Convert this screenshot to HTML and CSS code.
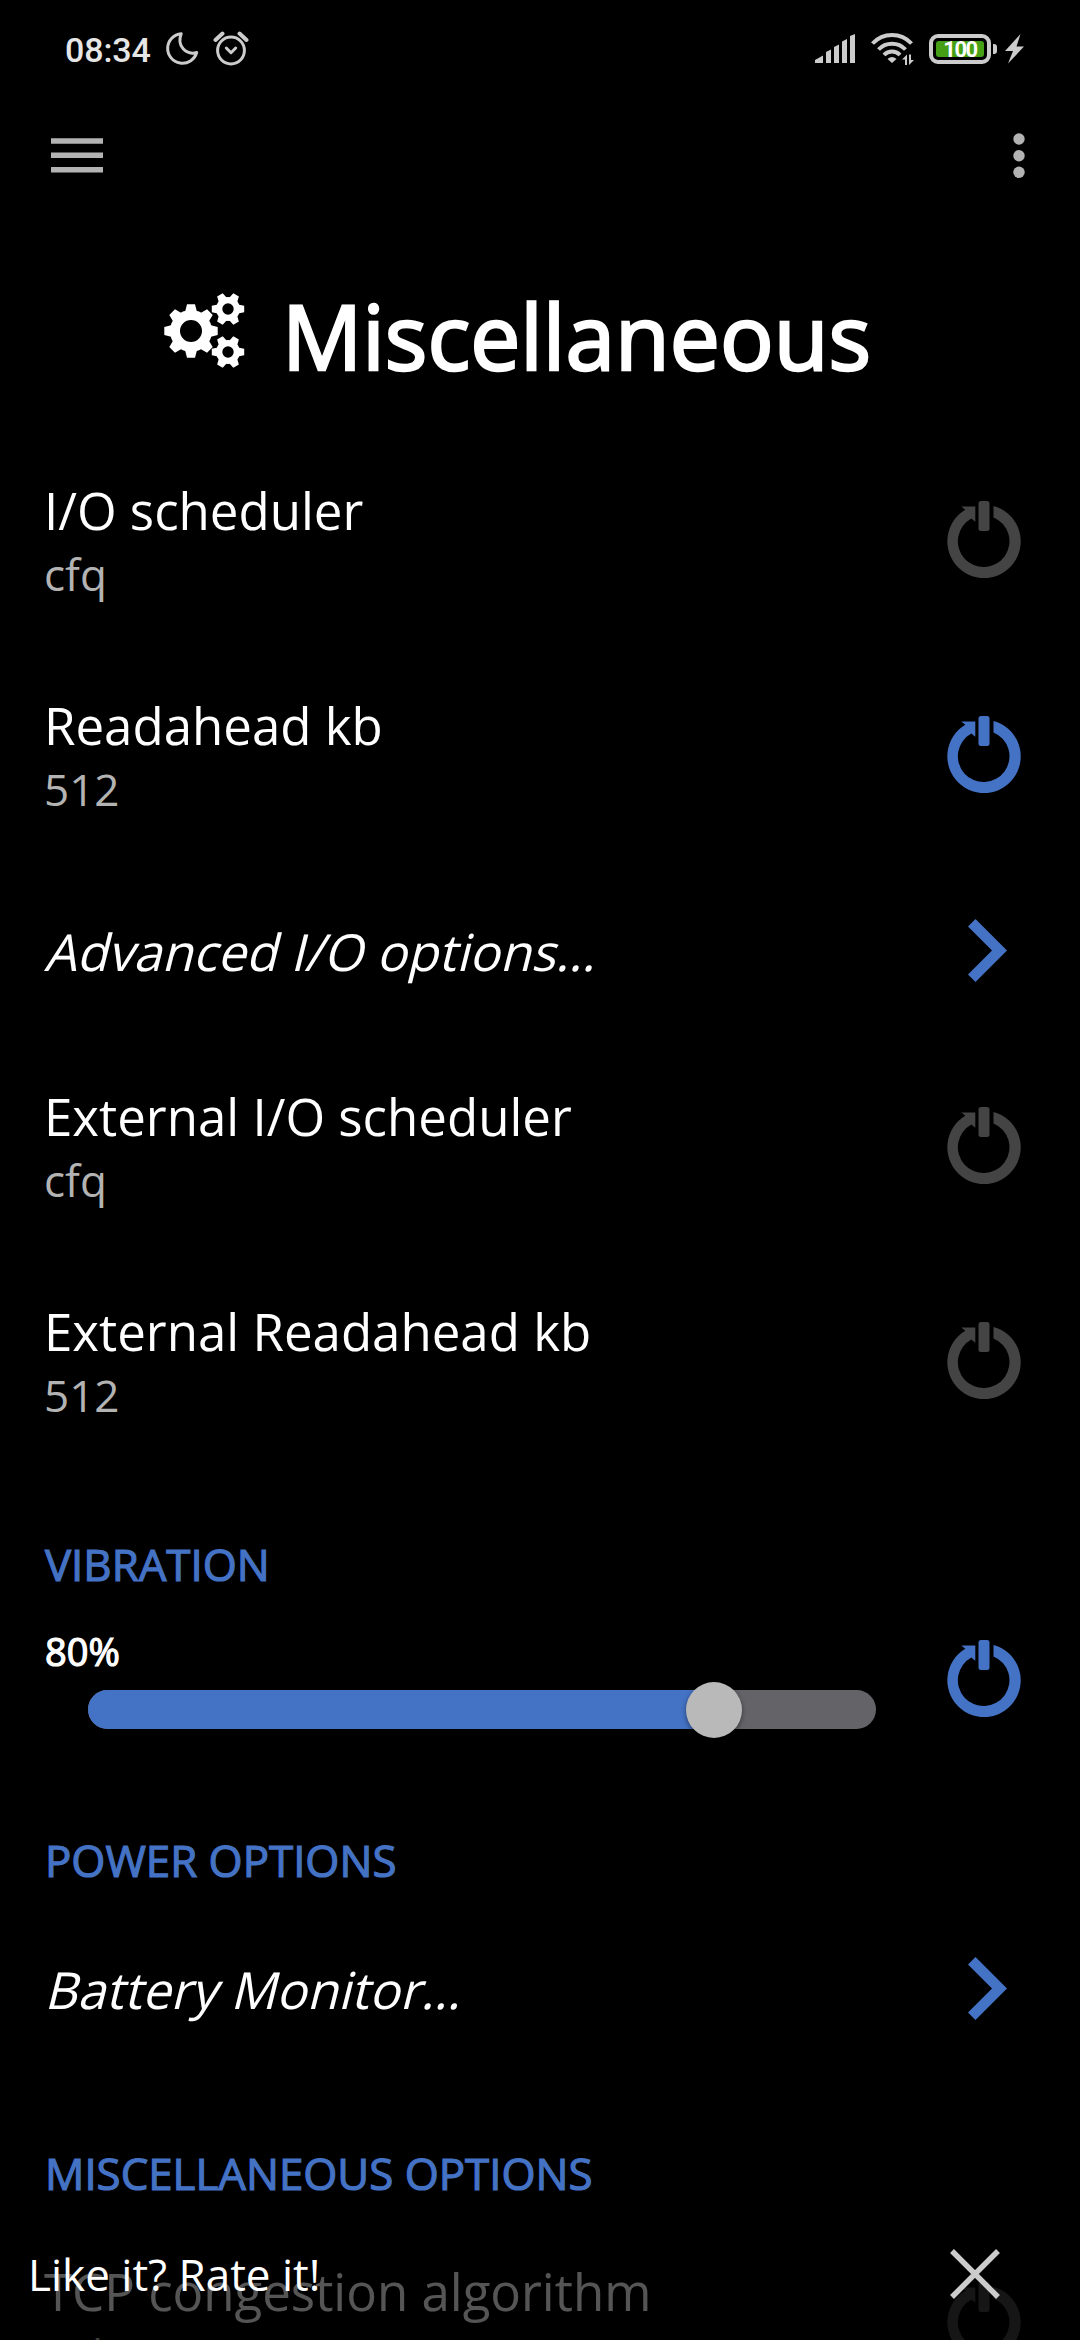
FILE: index.html
```html
<!DOCTYPE html>
<html lang="en">
<head>
<meta charset="utf-8">
<title>Miscellaneous</title>
<link rel="stylesheet" href="styles.css">
</head>
<body>
<svg class="defs" width="0" height="0">
  <symbol id="power" viewBox="0 0 74 77">
    <path d="M46.5 4.9A36.7 36.7 0 1 1 18.3 8.8L14.3 5.6H28.3V20.7L24.3 17.6A25.8 25.8 0 1 0 46.5 16.4Z"/>
    <rect x="31.5" y="0" width="11" height="30" rx="2.5"/>
  </symbol>
  <symbol id="chevron" viewBox="0 0 39 63">
    <path d="M7.5 0L39 31.5L7.5 63L0 55.5L24 31.5L0 7.5Z"/>
  </symbol>
  <symbol id="gear8" viewBox="-27 -27 54 54">
    <circle r="16" fill="none" stroke="currentColor" stroke-width="10"/>
    <g id="pair"><path d="M-6-19L-4-26.7H4L6-19ZM-6 19L-4 26.7H4L6 19Z"/></g>
    <use href="#pair" transform="rotate(45)"/><use href="#pair" transform="rotate(90)"/><use href="#pair" transform="rotate(135)"/>
  </symbol>
  <symbol id="gear6" viewBox="-17 -17 34 34">
    <circle r="8.8" fill="none" stroke="currentColor" stroke-width="6.2"/>
    <g id="duo" transform="rotate(30)"><path d="M-4.6-10L-3.2-16.2H3.2L4.6-10ZM-4.6 10L-3.2 16.2H3.2L4.6 10Z"/></g>
    <use href="#duo" transform="rotate(60)"/><use href="#duo" transform="rotate(120)"/>
  </symbol>
</svg>
<div class="screen">
  <header class="status">
    <span class="clock">08:34</span>
    <svg class="moon" width="34" height="34" viewBox="0 0 34 34"><path d="M16.2 1.7A14.8 14.8 0 1 0 31.7 20.5C21 23.5 11.500 14 16.2 1.700Z"/></svg>
    <svg class="alarm" width="36" height="36" viewBox="0 0 36 36"><circle cx="18" cy="19.500" r="13.400"/><path d="M13.300 17L18 21.700L22.700 17"/><path class="ear" d="M2.500 9L9.500 2.500M26.500 2.500L33.500 9"/></svg>
    <svg class="signal" width="40" height="30" viewBox="0 0 40 30"><path d="M0 26L8 21.500V29H0ZM11 18L16 15.500V29H11ZM19 13L24 10.500V29H19ZM27 7.500L32 5V29H27ZM35 2L40 0V29H35Z"/></svg>
    <svg class="wifi" width="44" height="34" viewBox="0 0 44 34"><g class="arcs"><path d="M1.500 11.500A26.500 26.500 0 0 1 40.500 11.500"/><path d="M7.500 17.500A18.500 18.500 0 0 1 34.500 17.500"/><path d="M13 23A11 11 0 0 1 29 23"/></g><path d="M21 31L16.500 27Q21 23 25.500 27Z"/><path d="M31 27.500L36 22.500V33H34V27.500ZM38 22.500V33L43 28H40V22.500Z"/></svg>
    <span class="battery"><span class="charge">100</span></span>
    <span class="nub"></span>
    <svg class="bolt" width="20" height="30" viewBox="0 0 20 30"><path d="M15.500 0L0 17H8L3 29.500L19 12.500H11.500Z"/></svg>
  </header>

  <nav class="toolbar">
    <svg width="52" height="36" viewBox="0 0 52 36"><path d="M0 .2H52V5.800H0ZM0 14.400H52V20H0ZM0 29H52V34.600H0Z"/></svg>
    <svg width="12" height="46" viewBox="0 0 12 46"><circle cx="6" cy="6" r="5.700"/><circle cx="6" cy="22.700" r="5.700"/><circle cx="6" cy="39.300" r="5.700"/></svg>
  </nav>

  <div class="heading">
    <svg class="gears" width="82" height="76" viewBox="0 0 82 76"><use href="#gear8" x="0" y="10" width="54" height="54"/><use href="#gear6" x="47" y="-2" width="34" height="34"/><use href="#gear6" x="47" y="41" width="34" height="34"/></svg>
    <h1>Miscellaneous</h1>
  </div>

  <main>
    <section class="row"><div><p class="name">I/O scheduler</p><p class="value">cfq</p></div><svg class="power"><use href="#power"/></svg></section>
    <section class="row"><div><p class="name">Readahead kb</p><p class="value">512</p></div><svg class="power on"><use href="#power"/></svg></section>
    <section class="row link"><p class="name">Advanced I/O options…</p><svg class="chevron"><use href="#chevron"/></svg></section>
    <section class="row"><div><p class="name">External I/O scheduler</p><p class="value">cfq</p></div><svg class="power"><use href="#power"/></svg></section>
    <section class="row"><div><p class="name">External Readahead kb</p><p class="value">512</p></div><svg class="power"><use href="#power"/></svg></section>
    <h2 class="vibration">VIBRATION</h2>
    <section class="row slider-row">
      <div class="slider-box"><p class="percent">80%</p><div class="track"><div class="fill" style="width:79.4%"></div><div class="thumb" style="left:79.4%"></div></div></div>
      <svg class="power on"><use href="#power"/></svg>
    </section>
    <h2>POWER OPTIONS</h2>
    <section class="row link"><p class="name">Battery Monitor…</p><svg class="chevron"><use href="#chevron"/></svg></section>
    <h2>MISCELLANEOUS OPTIONS</h2>
    <section class="row"><div><p class="name">TCP congestion algorithm</p><p class="value">cubic</p></div><svg class="power"><use href="#power"/></svg></section>
  </main>

  <aside class="rate">
    <span>Like it? Rate it!</span>
    <svg width="50" height="50" viewBox="0 0 50 50"><path d="M2 2L48 48M48 2L2 48"/></svg>
  </aside>
</div>
</body>
</html>
```
FILE: styles.css
```css
* { box-sizing: border-box; margin: 0; padding: 0; }
body { background: #000; }
svg { display: block; flex: none; }
.defs { position: absolute; }
.screen {
  position: relative;
  width: 1080px;
  height: 2340px;
  overflow: hidden;
  background: #000;
  color: #fff;
  font-family: "Open Sans", "Noto Sans", sans-serif;
}

.status {
  display: flex;
  align-items: center;
  height: 100px;
  padding: 0 55px 2px 65px;
  color: #ccc;
  fill: #ccc;
}
.clock {
  width: 100px;
  padding-top: 2px;
  font: 500 34px/40px Roboto, sans-serif;
  color: #e6e6e6;
  letter-spacing: -0.1px;
}
.moon, .alarm { fill: none; stroke: #ccc; stroke-width: 3; stroke-linejoin: round; stroke-linecap: round; }
.alarm { margin-left: 14px; }
.alarm .ear { stroke-width: 4; }
.signal { margin-left: auto; }
.wifi { margin-left: 16px; overflow: visible; }
.arcs { fill: none; stroke: #ccc; stroke-width: 4; }
.battery {
  width: 62px;
  height: 30px;
  margin-left: 14px;
  padding: 3px;
  border: 4px solid #ccc;
  border-radius: 9px;
}
.charge {
  display: block;
  height: 16px;
  border-radius: 3px;
  background: #45a015;
  color: #fff;
  font: 700 22px/17px Roboto, sans-serif;
  letter-spacing: -1.5px;
  text-align: center;
}
.nub { width: 4px; height: 10px; margin-left: 2px; border-radius: 0 3px 3px 0; background: #ccc; }
.bolt { margin-left: 8px; }

.toolbar {
  display: flex;
  justify-content: space-between;
  align-items: center;
  height: 112px;
  padding: 0 55px 0 51px;
  fill: #b3b3b3;
}

.heading { display: flex; height: 220px; padding-left: 164px; }
.gears { margin-top: 82px; fill: #fff; color: #fff; overflow: visible; }
h1 {
  margin: 63px 0 0 36px;
  font-size: 89.3px;
  font-weight: 400;
  line-height: 122px;
  -webkit-text-stroke: 2.5px #fff;
  white-space: nowrap;
}

.row {
  display: flex;
  justify-content: space-between;
  height: 215px;
  padding: 44px 59px 0 44px;
}
.name { font-size: 51px; line-height: 68px; white-space: nowrap; }
.value { font-size: 44px; line-height: 60px; color: #b3b3b3; }
.power { width: 74px; height: 77px; margin-top: 25px; fill: #444; }
.power.on { fill: #4472c4; }
.link { height: 176px; align-items: center; padding: 0 73px 0 44px; }
.link .name { padding-top: 1px; transform: skewX(-14deg); transform-origin: 0 55px; }
.chevron { width: 39px; height: 63px; fill: #4472c4; }

h2 {
  height: 137px;
  padding: 67px 0 0 45px;
  color: #4472c4;
  font-size: 43.8px;
  font-weight: 400;
  line-height: 60px;
  -webkit-text-stroke: 1.2px #4472c4;
}
.vibration { padding-top: 66px; }
.slider-row { height: 158px; padding-top: 18px; }
.slider-row .power { margin-top: 17px; }
.slider-box { width: 832px; }
.percent { padding-left: 1px; font-size: 38px; line-height: 56px; -webkit-text-stroke: 1.2px #fff; }
.track {
  position: relative;
  width: 788px;
  height: 39px;
  margin: 11px 0 0 44px;
  border-radius: 20px;
  background: #646368;
}
.fill { height: 39px; border-radius: 20px 0 0 20px; background: #4472c4; }
.thumb {
  position: absolute;
  top: -8px;
  width: 56px;
  height: 56px;
  margin-left: -28px;
  border-radius: 50%;
  background: #b9b9b9;
  box-shadow: 0 2px 5px rgba(0, 0, 0, 0.45);
}

.rate {
  position: absolute;
  left: 0;
  right: 0;
  bottom: 0;
  display: flex;
  align-items: center;
  justify-content: space-between;
  height: 132px;
  padding: 0 80px 0 28px;
  background: rgba(0, 0, 0, 0.667);
  font-size: 44px;
  line-height: 60px;
}
.rate svg { fill: none; stroke: #ccc; stroke-width: 5.500; }
```
